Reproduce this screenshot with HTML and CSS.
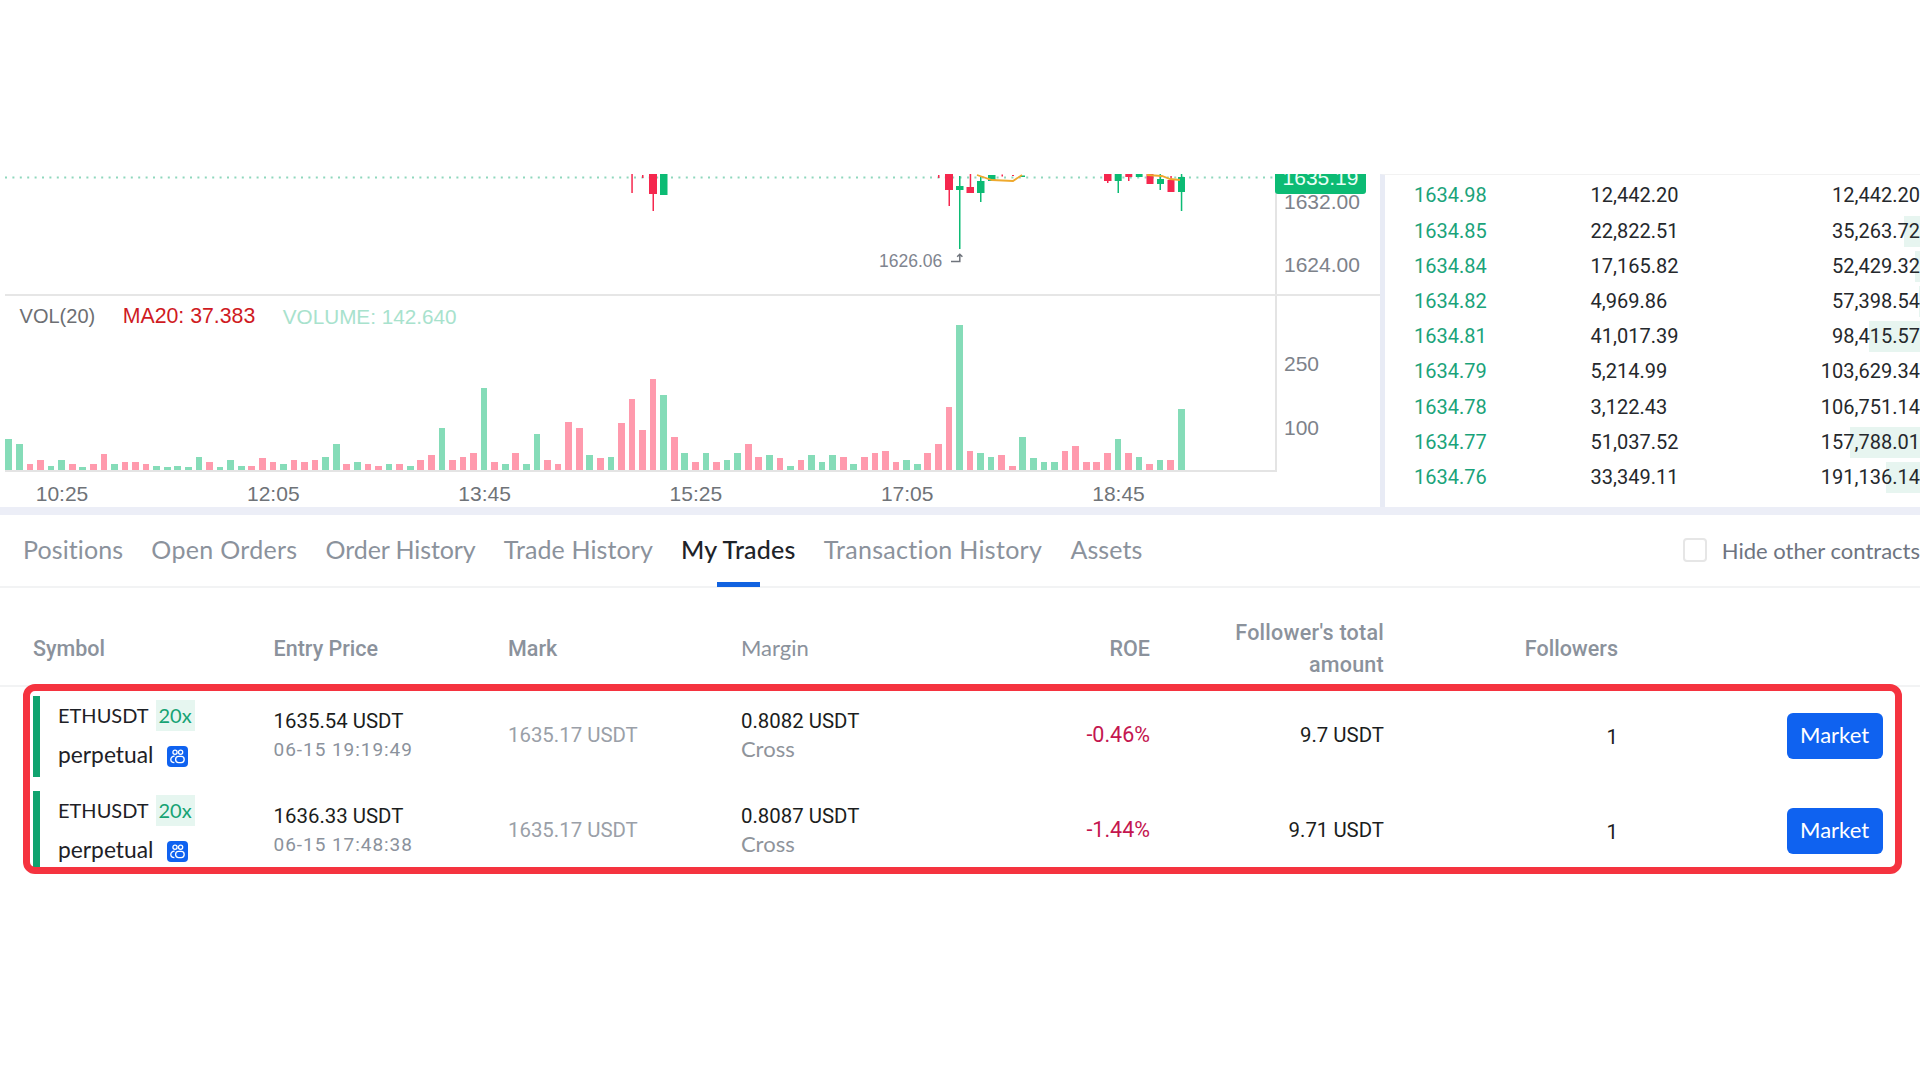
FILE: index.html
```html
<!DOCTYPE html>
<html lang="en">
<head>
<meta charset="utf-8">
<title>My Trades</title>
<link rel="stylesheet" href="styles.css">
</head>
<body>
<main class="page">
  <section class="top">
    <div class="chart">
      <div class="price">
        <div class="plot price-plot">
          <svg class="candles" viewBox="5 174 1271 120" width="1271" height="120">
            <line class="last" x1="5" y1="177.5" x2="1276" y2="177.5"/>
            <g class="cr">
              <rect x="631.3" y="174" width="1.5" height="19"/><rect x="642" y="175" width="1.5" height="3"/>
              <rect x="652.5" y="174" width="1.5" height="37"/><rect x="649" y="174" width="8" height="20"/>
              <rect x="938" y="175" width="1.5" height="3"/>
              <rect x="948.5" y="174" width="1.5" height="32"/><rect x="945" y="174" width="8" height="16"/>
              <rect x="969.7" y="174" width="1.5" height="14"/><rect x="966.5" y="187" width="7.5" height="6"/>
              <rect x="1001.5" y="174.5" width="1.5" height="2"/><rect x="1012" y="175" width="2" height="1"/>
              <rect x="1107" y="174" width="1.5" height="9"/><rect x="1104" y="174" width="7.5" height="7"/>
              <rect x="1128" y="174" width="1.5" height="7"/><rect x="1125.3" y="174" width="7" height="3"/>
              <rect x="1146.5" y="174" width="7" height="10"/>
              <rect x="1170.3" y="176" width="1.5" height="5"/><rect x="1167.5" y="180" width="7" height="12"/>
            </g>
            <g class="cg">
              <rect x="663" y="174" width="1.5" height="21"/><rect x="660" y="174" width="7.5" height="21"/>
              <rect x="959" y="176" width="1.5" height="73"/><rect x="956" y="186" width="7.5" height="4"/>
              <rect x="980" y="176" width="1.5" height="26"/><rect x="977" y="181" width="7.5" height="12"/>
              <rect x="988" y="175" width="7.5" height="6"/><rect x="1020" y="175.5" width="5" height="1.5"/>
              <rect x="1117.5" y="174" width="1.5" height="19"/><rect x="1114.7" y="174" width="7" height="7"/>
              <rect x="1135.8" y="174" width="6.8" height="3"/>
              <rect x="1159.5" y="174" width="1.5" height="16"/><rect x="1157" y="179" width="7" height="5"/>
              <rect x="1180.8" y="174" width="1.5" height="37"/><rect x="1178" y="177" width="7" height="15"/>
            </g>
            <polyline class="ma" points="977,175 992,180 1013,181 1022,175"/>
            <polyline class="ma" points="1147,175 1162,176 1170,179 1180,180"/>
            <text class="low" x="879" y="267">1626.06</text>
            <path class="low-arrow" d="M951 261.5H959.8V254.5M957.2 256.8L959.8 254.2L962.4 256.8"/>
          </svg>
        </div>
        <div class="axis price-axis">
          <span>1632.00</span>
          <span>1624.00</span>
          <div class="last-tag">1635.19</div>
        </div>
      </div>
      <div class="volume">
        <div class="plot vol-plot">
          <div class="legend">
            <span class="l-vol">VOL(20)</span>
            <span class="l-ma">MA20: 37.383</span>
            <span class="l-v">VOLUME: 142.640</span>
          </div>
          <div class="bars">
            <i class="g" style="height:31px"></i><i class="g" style="height:25.7px"></i><i class="r" style="height:6.3px"></i><i class="r" style="height:9.7px"></i><i class="g" style="height:4.3px"></i><i class="g" style="height:9.7px"></i><i class="r" style="height:6.3px"></i><i class="g" style="height:2.7px"></i><i class="r" style="height:6.3px"></i><i class="r" style="height:16.3px"></i>
            <i class="g" style="height:6.3px"></i><i class="r" style="height:8px"></i><i class="r" style="height:8px"></i><i class="r" style="height:6.3px"></i><i class="g" style="height:4.3px"></i><i class="g" style="height:2.7px"></i><i class="g" style="height:4.3px"></i><i class="g" style="height:2.7px"></i><i class="g" style="height:13.3px"></i><i class="r" style="height:8px"></i>
            <i class="g" style="height:2.7px"></i><i class="g" style="height:9.7px"></i><i class="g" style="height:4.3px"></i><i class="r" style="height:4.3px"></i><i class="r" style="height:11.7px"></i><i class="r" style="height:8px"></i><i class="g" style="height:6.3px"></i><i class="r" style="height:9.7px"></i><i class="r" style="height:8px"></i><i class="r" style="height:9.7px"></i>
            <i class="g" style="height:13.3px"></i><i class="g" style="height:25.7px"></i><i class="r" style="height:6.3px"></i><i class="g" style="height:8px"></i><i class="r" style="height:6.3px"></i><i class="r" style="height:4.3px"></i><i class="g" style="height:6.3px"></i><i class="r" style="height:6.3px"></i><i class="g" style="height:4.3px"></i><i class="r" style="height:9.7px"></i>
            <i class="r" style="height:15px"></i><i class="g" style="height:41.7px"></i><i class="r" style="height:9.7px"></i><i class="r" style="height:13.3px"></i><i class="r" style="height:16.7px"></i><i class="g" style="height:82px"></i><i class="r" style="height:8px"></i><i class="g" style="height:6.3px"></i><i class="r" style="height:16.7px"></i><i class="g" style="height:6.3px"></i>
            <i class="g" style="height:36.3px"></i><i class="r" style="height:9.7px"></i><i class="r" style="height:6.3px"></i><i class="r" style="height:48.3px"></i><i class="r" style="height:41.7px"></i><i class="g" style="height:15px"></i><i class="r" style="height:11.7px"></i><i class="g" style="height:13.3px"></i><i class="r" style="height:47px"></i><i class="r" style="height:71px"></i>
            <i class="r" style="height:39.7px"></i><i class="r" style="height:91px"></i><i class="g" style="height:75px"></i><i class="r" style="height:32.7px"></i><i class="g" style="height:16.7px"></i><i class="r" style="height:8px"></i><i class="g" style="height:16.7px"></i><i class="r" style="height:8px"></i><i class="g" style="height:9.7px"></i><i class="g" style="height:16.7px"></i>
            <i class="r" style="height:25.7px"></i><i class="r" style="height:13.3px"></i><i class="g" style="height:15px"></i><i class="r" style="height:11.7px"></i><i class="g" style="height:4.3px"></i><i class="r" style="height:9.7px"></i><i class="g" style="height:15px"></i><i class="g" style="height:8px"></i><i class="g" style="height:15px"></i><i class="r" style="height:13.3px"></i>
            <i class="g" style="height:6.3px"></i><i class="r" style="height:13.3px"></i><i class="r" style="height:16.7px"></i><i class="r" style="height:18.7px"></i><i class="r" style="height:8px"></i><i class="g" style="height:9.7px"></i><i class="g" style="height:6.3px"></i><i class="r" style="height:16.7px"></i><i class="r" style="height:25.7px"></i><i class="r" style="height:62.7px"></i>
            <i class="g" style="height:145.3px"></i><i class="r" style="height:18.7px"></i><i class="g" style="height:16.7px"></i><i class="g" style="height:13.3px"></i><i class="r" style="height:15px"></i><i class="r" style="height:4.3px"></i><i class="g" style="height:32.7px"></i><i class="g" style="height:11.7px"></i><i class="g" style="height:8px"></i><i class="g" style="height:8px"></i>
            <i class="r" style="height:18.7px"></i><i class="r" style="height:24px"></i><i class="r" style="height:8px"></i><i class="r" style="height:8px"></i><i class="r" style="height:16.7px"></i><i class="g" style="height:31px"></i><i class="r" style="height:16.7px"></i><i class="g" style="height:13.3px"></i><i class="r" style="height:6.3px"></i><i class="g" style="height:9.7px"></i>
            <i class="r" style="height:9.7px"></i><i class="g" style="height:61px"></i>
          </div>
        </div>
        <div class="axis vol-axis">
          <span>250</span>
          <span>100</span>
        </div>
      </div>
      <div class="times">
        <span>10:25</span><span>12:05</span><span>13:45</span><span>15:25</span><span>17:05</span><span>18:45</span>
      </div>
    </div>
    <div class="book">
      <div class="bk-row"><span class="bk-p">1634.98</span><span class="bk-s">12,442.20</span><span class="bk-t">12,442.20</span></div>
      <div class="bk-row"><span class="bk-p">1634.85</span><span class="bk-s">22,822.51</span><span class="bk-t" style="--d:16px">35,263.72</span></div>
      <div class="bk-row"><span class="bk-p">1634.84</span><span class="bk-s">17,165.82</span><span class="bk-t" style="--d:5px">52,429.32</span></div>
      <div class="bk-row"><span class="bk-p">1634.82</span><span class="bk-s">4,969.86</span><span class="bk-t" style="--d:1px">57,398.54</span></div>
      <div class="bk-row"><span class="bk-p">1634.81</span><span class="bk-s">41,017.39</span><span class="bk-t" style="--d:51px">98,415.57</span></div>
      <div class="bk-row"><span class="bk-p">1634.79</span><span class="bk-s">5,214.99</span><span class="bk-t">103,629.34</span></div>
      <div class="bk-row"><span class="bk-p">1634.78</span><span class="bk-s">3,122.43</span><span class="bk-t">106,751.14</span></div>
      <div class="bk-row"><span class="bk-p">1634.77</span><span class="bk-s">51,037.52</span><span class="bk-t" style="--d:70px">157,788.01</span></div>
      <div class="bk-row"><span class="bk-p">1634.76</span><span class="bk-s">33,349.11</span><span class="bk-t" style="--d:34px">191,136.14</span></div>
    </div>
  </section>
  <div class="gutter"></div>
  <nav class="tabs">
    <a class="tab">Positions</a>
    <a class="tab tab-loose">Open Orders</a>
    <a class="tab tab-tight">Order History</a>
    <a class="tab">Trade History</a>
    <a class="tab active">My Trades</a>
    <a class="tab tab-loose">Transaction History</a>
    <a class="tab">Assets</a>
    <label class="hide"><span class="check"></span>Hide other contracts</label>
  </nav>
  <section class="table">
    <div class="thead">
      <span>Symbol</span>
      <span>Entry Price</span>
      <span>Mark</span>
      <span class="th-geo">Margin</span>
      <span class="ta-r">ROE</span>
      <span class="ta-r th-wide">Follower's total<br>amount</span>
      <span class="ta-r">Followers</span>
      <span></span>
    </div>
    <div class="trow">
      <div class="sym">
        <div class="sym-l1"><span>ETHUSDT</span><span class="lev">20x</span></div>
        <div class="sym-l2"><span>perpetual</span>
          <svg class="copy" viewBox="0 0 21 21" width="21" height="21"><rect width="21" height="21" rx="4" class="copy-bg"/><circle cx="8" cy="6.3" r="2.1"/><circle cx="13.6" cy="6.3" r="2.1"/><rect x="8.6" y="10.4" width="8.6" height="6.2" rx="3"/><path d="M7.6 10.2C5 10.2 3.8 12 3.8 13.5C3.8 15.2 5.2 16.6 7.4 16.6"/></svg>
        </div>
      </div>
      <div class="two"><span class="num">1635.54 USDT</span><span class="sub">06-15 19:19:49</span></div>
      <div class="num mark">1635.17 USDT</div>
      <div class="two"><span class="num">0.8082 USDT</span><span class="cross">Cross</span></div>
      <div class="num roe ta-r">-0.46%</div>
      <div class="num ta-r">9.7 USDT</div>
      <div class="num one ta-r">1</div>
      <div class="act"><button class="market">Market</button></div>
    </div>
    <div class="trow">
      <div class="sym">
        <div class="sym-l1"><span>ETHUSDT</span><span class="lev">20x</span></div>
        <div class="sym-l2"><span>perpetual</span>
          <svg class="copy" viewBox="0 0 21 21" width="21" height="21"><rect width="21" height="21" rx="4" class="copy-bg"/><circle cx="8" cy="6.3" r="2.1"/><circle cx="13.6" cy="6.3" r="2.1"/><rect x="8.6" y="10.4" width="8.6" height="6.2" rx="3"/><path d="M7.6 10.2C5 10.2 3.8 12 3.8 13.5C3.8 15.2 5.2 16.6 7.4 16.6"/></svg>
        </div>
      </div>
      <div class="two"><span class="num">1636.33 USDT</span><span class="sub">06-15 17:48:38</span></div>
      <div class="num mark">1635.17 USDT</div>
      <div class="two"><span class="num">0.8087 USDT</span><span class="cross">Cross</span></div>
      <div class="num roe ta-r">-1.44%</div>
      <div class="num ta-r">9.71 USDT</div>
      <div class="num one ta-r">1</div>
      <div class="act"><button class="market">Market</button></div>
    </div>
    <div class="callout"></div>
  </section>
</main>
</body>
</html>
```
FILE: styles.css
```css
* { box-sizing: border-box; }
html, body { margin: 0; padding: 0; background: #fff; }
body { width: 1920px; height: 1080px; overflow: hidden; font-family: "Liberation Sans", Arial, sans-serif; }
.page { display: flex; flex-direction: column; padding-top: 174px; height: 1080px; }

/* chart */
.top { display: flex; height: 333px; overflow: hidden; }
.chart { width: 1380px; flex: none; }
.price { display: flex; height: 122px; margin-left: 5px; border-bottom: 2px solid #e6e6e6; }
.plot { width: 1270px; flex: none; }
.price-plot { height: 120px; }
.candles { display: block; overflow: hidden; }
.last { stroke: #8fd8bd; stroke-width: 1.8; stroke-dasharray: 2 5.4; }
.cr rect { fill: #f5274e; }
.cg rect { fill: #0cbb74; }
.ma { fill: none; stroke: #efa92d; stroke-width: 1.8; }
.low { font-size: 17.5px; fill: #7f8590; }
.low-arrow { fill: none; stroke: #6f747c; stroke-width: 1.5; }
.axis { position: relative; flex: 1; border-left: 2px solid #e4e4e4; display: flex; flex-direction: column; padding-left: 7px; font-size: 21px; line-height: 24px; color: #7d828a; }
.price-axis { padding-top: 16px; gap: 39.3px; }
.last-tag { position: absolute; left: -2px; top: 0; width: 91px; height: 20px; overflow: hidden; background: #0cbb74; color: #e8fff5; border-radius: 0 0 3px 3px; text-align: center; line-height: 8px; }
.volume { display: flex; height: 176px; margin-left: 5px; }
.vol-plot { display: flex; flex-direction: column; border-bottom: 2px solid #e4e4e4; height: 176px; }
.legend { display: flex; gap: 27.5px; height: 32px; flex: none; padding: 9px 0 0 14.6px; font-size: 20px; line-height: 23px; }
.l-vol { color: #6d6f73; }
.l-ma { color: #cf1a22; font-size: 21.3px; }
.l-v { color: #a8e2cd; font-size: 20.7px; }
.bars { flex: 1; min-height: 0; display: flex; align-items: flex-end; gap: 3.875px; padding-left: .45px; }
.bars i { display: block; width: 6.7px; flex: none; }
.bars .g { background: #85dcb8; }
.bars .r { background: #ff9aad; }
.vol-axis { padding-top: 56px; gap: 39.6px; }
.times { display: flex; gap: 157.3px; padding: 10px 0 0 35px; font-size: 21px; line-height: 24px; color: #6f7378; text-align: center; }
.times span { width: 54px; flex: none; }

/* order book */
.book { flex: 1; border-left: 5px solid #e8ebf5; border-top: 1px solid #f2f2f2; padding-top: 3.4px; font-family: Roboto, sans-serif; font-size: 20px; }
.bk-row { display: flex; height: 35.2px; align-items: stretch; }
.bk-p, .bk-s, .bk-t { line-height: 35.2px; }
.bk-p { width: 176.6px; margin-left: 29px; color: #1aa37a; }
.bk-s { width: 150px; color: #25282c; }
.bk-t { flex: 1; text-align: right; color: #25282c; background: linear-gradient(#e7f5f0, #e7f5f0) right center / var(--d, 0) 31px no-repeat; }

.gutter { height: 8px; background: #eceef7; flex: none; }

/* tabs */
.tabs { display: flex; align-items: stretch; height: 73px; padding-left: 23px; gap: 28.2px; border-bottom: 2px solid #f2f3f4; font-family: Lato, sans-serif; font-size: 25px; letter-spacing: .1px; flex: none; }
.tab { position: relative; display: flex; align-items: center; height: 71px; padding-bottom: 3px; color: #8b929c; }
.tab-loose { letter-spacing: .3px; }
.tab-tight { letter-spacing: -.1px; }
.tab.active { color: #1e2329; font-weight: 500; letter-spacing: .2px; }
.tab.active::after { content: ""; position: absolute; left: 50%; bottom: -1px; width: 43px; height: 5px; margin-left: -21.5px; background: #1162e0; }
.hide { margin-left: auto; display: flex; align-items: center; gap: 15px; color: #6e7480; font-size: 22px; letter-spacing: 0; white-space: nowrap; padding-bottom: 1px; }
.check { width: 24px; height: 24px; border: 2px solid #e6e6e6; border-radius: 4px; }

/* table */
.table { position: relative; font-family: Roboto, sans-serif; }
.thead, .trow { display: grid; grid-template-columns: 240.6px 234.4px 233px 159px 250px 234px 234px 264.6px; padding-left: 33px; }
.thead { height: 99px; align-items: center; padding-top: 29px; padding-bottom: 7px; border-bottom: 2px solid #f2f3f4; color: #8b929c; font-size: 21.5px; font-weight: 500; line-height: 32px; margin-bottom: 8.7px; }
.th-geo { font-family: Lato, sans-serif; font-weight: 400; font-size: 22px; position: relative; top: -1px; }
.th-wide { letter-spacing: .25px; }
.ta-r { text-align: right; }
.trow { height: 81px; margin-bottom: 14.3px; align-items: center; color: #1b1d20; }
.num { font-size: 20.4px; line-height: 24px; position: relative; top: -1px; }
.sym { height: 100%; border-left: 7px solid #10a36e; padding-left: 18px; font-family: Lato, sans-serif; color: #1e2126; }
.sym-l1 { display: flex; align-items: center; gap: 7px; height: 31px; margin-top: 4px; line-height: 31px; font-size: 20px; }
.lev { background: #e6f6f0; color: #16a374; width: 39px; text-align: center; font-size: 20px; height: 31px; }
.sym-l2 { display: flex; align-items: center; gap: 14px; height: 21px; margin-top: 15px; font-size: 22.8px; }
.sym-l2 span { position: relative; top: -2px; }
.copy { flex: none; fill: none; stroke: #fff; stroke-width: 1.3; }
.copy-bg { fill: #0f62f0; stroke: none; }
.two { display: flex; flex-direction: column; gap: 4px; }
.sub { color: #8b929c; font-size: 19px; line-height: 24px; letter-spacing: .95px; }
.cross { color: #8f949b; font-family: Lato, sans-serif; font-size: 22px; line-height: 24px; position: relative; top: -1px; }
.mark { color: #9aa0a8; }
.roe { color: #c4164f; font-size: 21.5px; }
.one { padding-top: 4px; }
.act { display: flex; justify-content: flex-end; }
.market { width: 96px; height: 46px; border: 0; border-radius: 6px; background: #0f62f0; color: #fff; font-family: Lato, sans-serif; font-size: 22px; padding: 0 0 4px; }
.callout { position: absolute; left: 23px; top: 96.3px; width: 1879px; height: 190px; border: 7px solid #f5333f; border-radius: 12px; }
```
